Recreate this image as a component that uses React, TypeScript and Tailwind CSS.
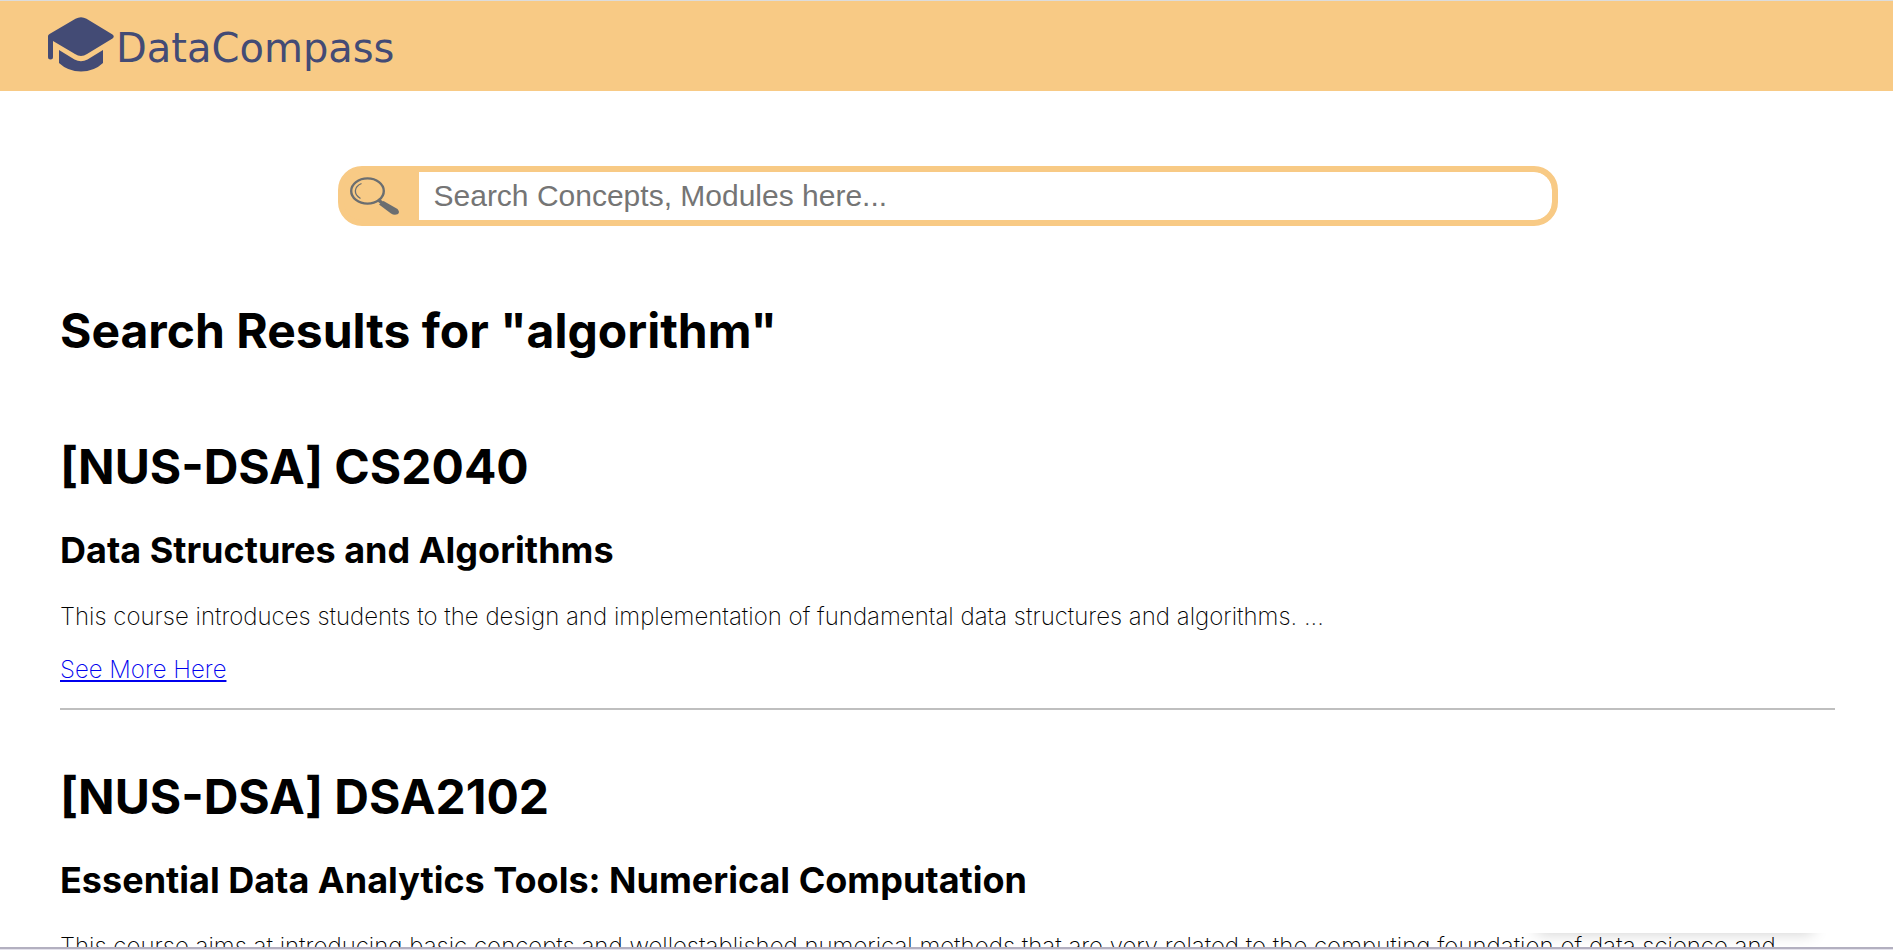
const results = [
  {
    code: "[NUS-DSA] CS2040",
    title: "Data Structures and Algorithms",
    text: "This course introduces students to the design and implementation of fundamental data structures and algorithms. ...",
  },
  {
    code: "[NUS-DSA] DSA2102",
    title: "Essential Data Analytics Tools: Numerical Computation",
    text: "This course aims at introducing basic concepts and wellestablished numerical methods that are very related to the computing foundation of data science and",
  },
];

function Logo() {
  return (
    <a href="#" className="flex items-center gap-[2px] text-[#434b75]">
      <svg viewBox="0 0 66 55" className="h-[55px] w-[66px]" fill="currentColor" aria-hidden="true">
        <path d="M27.500 1.800Q33 -1.200 38.500 1.800L64.500 17.500Q67 19.500 64.500 21.500L39 37Q33 41 27 37L5 24V40Q5 42.500 2.500 42.500Q0 42.500 0 40V19Q0 17.800 1.500 17Z" />
        <path d="M11 33L26.500 42.500Q33 46 39.500 42.500L55 33V46Q46 54.500 33 54.500Q20 54.500 11 46Z" />
      </svg>
      <span className="pt-2 font-['DejaVu_Sans',sans-serif] text-[40px] leading-[46px]">DataCompass</span>
    </a>
  );
}

function SearchIcon() {
  return (
    <svg viewBox="0 0 49 38" className="h-[38px] w-[49px]" fill="none" stroke="#6b6e70" aria-hidden="true">
      <ellipse cx="17.500" cy="14" rx="16.300" ry="12.600" strokeWidth="2.400" />
      <path d="M11.500 6.500C3.500 10 3.500 17.500 10.500 21.500" strokeWidth="1.300" />
      <path d="M28 22.500L32 26" strokeWidth="3.500" />
      <path d="M33.500 24L47.500 32Q50.500 35.500 47.500 37.300Q44 38.500 41 36.500L29 27.500Z" fill="#6b6e70" stroke="none" />
    </svg>
  );
}

export default function App() {
  return (
    <div className="relative flex h-screen flex-col overflow-hidden border-t border-[#dcdcdc] bg-white font-['Inter',sans-serif] text-black">
      <header className="flex h-[90px] shrink-0 items-center bg-[#f8ca85] px-12 pb-1">
        <Logo />
      </header>
      <main className="min-h-0 flex-1 overflow-hidden pr-[58px] pl-[60px]">
        <form role="search" className="mx-auto mt-[75px] flex h-[60px] w-[1220px] max-w-full overflow-hidden rounded-3xl border-[6px] border-[#f8ca85] bg-[#f8ca85]">
          <button type="button" aria-label="Search" className="flex w-[75px] shrink-0 items-center pl-[6px]">
            <SearchIcon />
          </button>
          <input
            type="search"
            aria-label="Search concepts and modules"
            placeholder="Search Concepts, Modules here..."
            className="min-w-0 flex-1 rounded-r-[18px] bg-white px-[15px] pb-[2px] font-['Liberation_Sans',sans-serif] text-[30px] outline-none placeholder:text-[#757575]"
          />
        </form>
        <h1 className="mt-[76px] text-5xl leading-[58px] font-bold">Search Results for "algorithm"</h1>
        {results.map((r) => (
          <article key={r.code} className="mt-[78px] border-b-2 border-[#bfbfbf] pb-6 not-first-of-type:mt-[58px]">
            <h2 className="text-5xl leading-[58px] font-bold">{r.code}</h2>
            <h3 className="mt-8 text-4xl leading-[44px] font-bold">{r.title}</h3>
            <p className="mt-[30px] text-2xl leading-[29px] font-extralight">{r.text}</p>
            <a href="#" className="mt-6 inline-block text-2xl leading-[29px] font-extralight text-[#0000ee] underline">
              See More Here
            </a>
          </article>
        ))}
      </main>
      <footer className="h-[3px] shrink-0 border-t-2 border-[#b3b0c0] bg-[#e4e2ec]" />
      <div className="pointer-events-none absolute right-[60px] bottom-[3px] h-[14px] w-[316px] overflow-hidden">
        <div className="mx-auto -mt-10 h-10 w-[276px] shadow-[0_0_16px_rgb(0_0_0/0.2)]" />
      </div>
    </div>
  );
}
